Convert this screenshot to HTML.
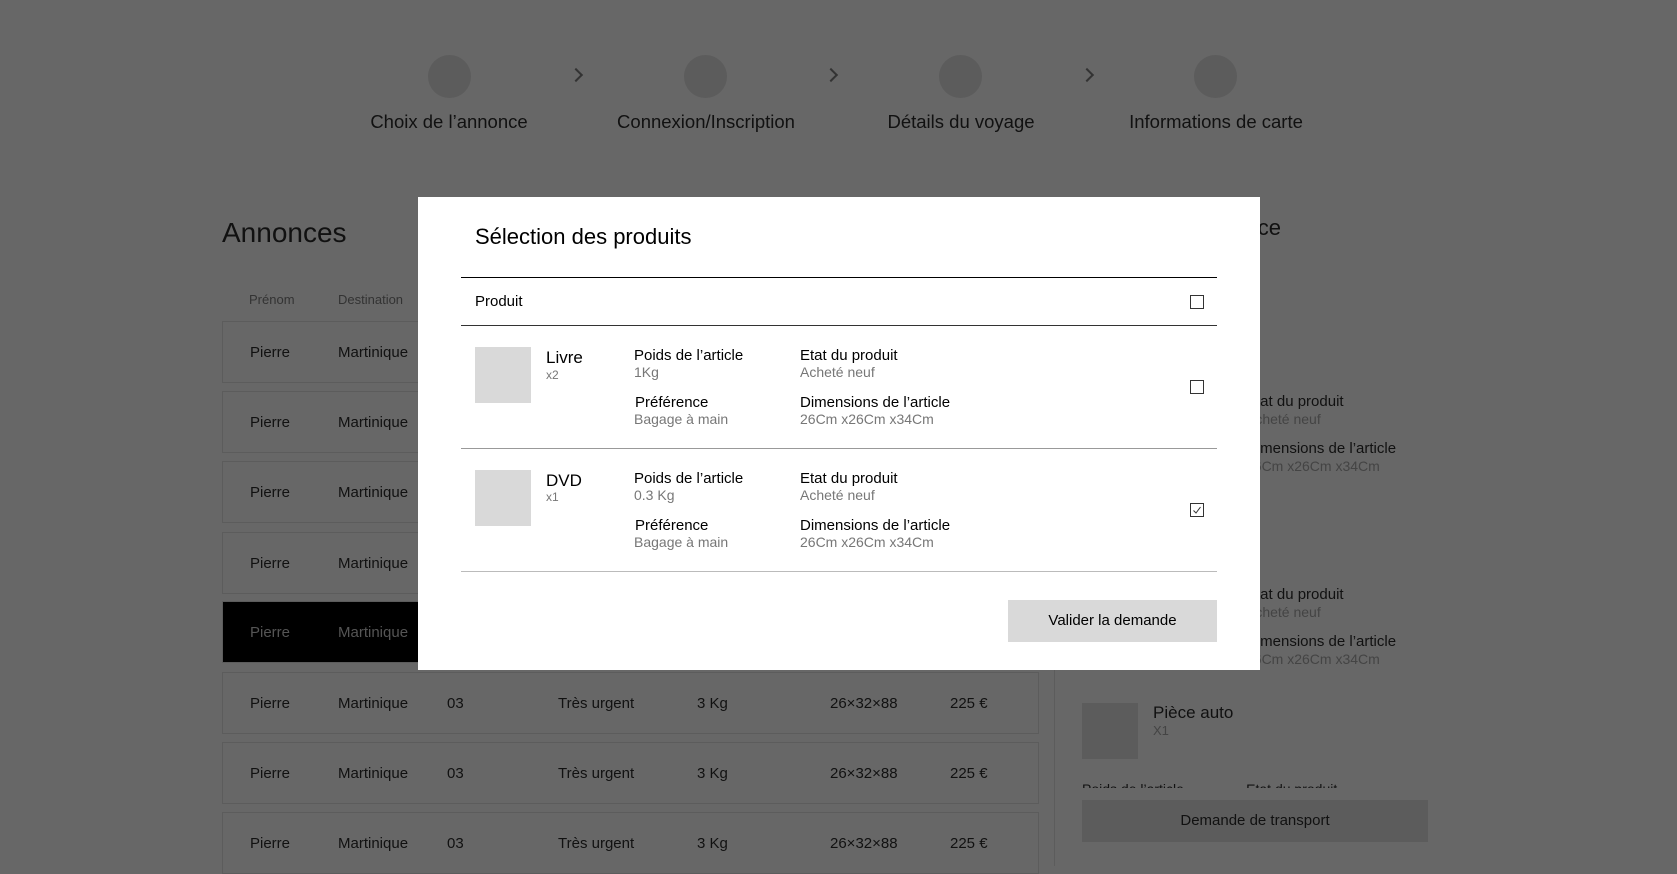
<!DOCTYPE html>
<html><head><meta charset="utf-8"><style>
*{margin:0;padding:0;box-sizing:border-box}
body{width:1677px;height:866px;background:#676767;font-family:"Liberation Sans",sans-serif;position:relative;overflow:hidden;color:#111}
.a{position:absolute;white-space:nowrap}
.c{position:absolute;width:43px;height:43px;border-radius:50%;background:#5c5c5c;top:55px}
.lbl{font-size:18.5px;top:111px;transform:translateX(-50%)}
.arr{position:absolute;top:70px;width:10px;height:10px;border-right:2px solid #333;border-top:2px solid #333;transform:rotate(45deg)}
.row{position:absolute;left:222px;width:817px;height:62px;border:1px solid #5c5c5c}
.row span{position:absolute;top:22px;font-size:15px;color:#111}
.blk{background:#000}.blk span{color:#555}
.m{position:absolute;left:418px;top:197px;width:842px;height:473px;background:#fff;color:#000}
.m .a{color:#000}
.h{font-size:15px}
.g{color:#777!important;font-size:14px}
.cb{position:absolute;width:14px;height:14px;border:1.3px solid #333}
.img{position:absolute;width:56px;height:56px;background:#d9d9d9}
</style></head><body>
<div class="c" style="left:428px"></div><div class="c" style="left:684px"></div><div class="c" style="left:939px"></div><div class="c" style="left:1194px"></div>
<div class="arr" style="left:571px"></div><div class="arr" style="left:826px"></div><div class="arr" style="left:1082px"></div>
<div class="a lbl" style="left:449px">Choix de l’annonce</div>
<div class="a lbl" style="left:706px">Connexion/Inscription</div>
<div class="a lbl" style="left:961px">Détails du voyage</div>
<div class="a lbl" style="left:1216px">Informations de carte</div>
<div class="a" style="left:222px;top:217px;font-size:28px">Annonces</div>
<div class="a" style="left:249px;top:292px;font-size:13px;color:#333">Prénom</div>
<div class="a" style="left:338px;top:292px;font-size:13px;color:#333">Destination</div>
<div class="row" style="top:321px"><span style="left:27px">Pierre</span><span style="left:115px">Martinique</span></div>
<div class="row" style="top:391px"><span style="left:27px">Pierre</span><span style="left:115px">Martinique</span></div>
<div class="row" style="top:461px"><span style="left:27px">Pierre</span><span style="left:115px">Martinique</span></div>
<div class="row" style="top:532px"><span style="left:27px">Pierre</span><span style="left:115px">Martinique</span></div>
<div class="row blk" style="top:601px"><span style="left:27px">Pierre</span><span style="left:115px">Martinique</span></div>
<div class="row" style="top:672px"><span style="left:27px">Pierre</span><span style="left:115px">Martinique</span><span style="left:224px">03</span><span style="left:335px">Très urgent</span><span style="left:474px">3 Kg</span><span style="left:607px">26×32×88</span><span style="left:727px">225 €</span></div>
<div class="row" style="top:742px"><span style="left:27px">Pierre</span><span style="left:115px">Martinique</span><span style="left:224px">03</span><span style="left:335px">Très urgent</span><span style="left:474px">3 Kg</span><span style="left:607px">26×32×88</span><span style="left:727px">225 €</span></div>
<div class="row" style="top:812px"><span style="left:27px">Pierre</span><span style="left:115px">Martinique</span><span style="left:224px">03</span><span style="left:335px">Très urgent</span><span style="left:474px">3 Kg</span><span style="left:607px">26×32×88</span><span style="left:727px">225 €</span></div>
<div class="a" style="left:1054px;top:215px;width:1px;height:651px;background:#5c5c5c"></div>
<div class="a" style="right:396px;top:215px;font-size:22px">Votre annonce</div>
<div class="a h" style="left:1246px;top:393px">Etat du produit</div><div class="a" style="left:1246px;top:411px;font-size:14px;color:#444">Acheté neuf</div>
<div class="a h" style="left:1246px;top:440px">Dimensions de l’article</div><div class="a" style="left:1246px;top:458px;font-size:14px;color:#444">26Cm x26Cm x34Cm</div>
<div class="a h" style="left:1246px;top:586px">Etat du produit</div><div class="a" style="left:1246px;top:604px;font-size:14px;color:#444">Acheté neuf</div>
<div class="a h" style="left:1246px;top:633px">Dimensions de l’article</div><div class="a" style="left:1246px;top:651px;font-size:14px;color:#444">26Cm x26Cm x34Cm</div>
<div class="a" style="left:1082px;top:703px;width:56px;height:56px;background:#5c5c5c"></div>
<div class="a" style="left:1153px;top:703px;font-size:17px">Pièce auto</div>
<div class="a" style="left:1153px;top:723px;font-size:13px;color:#444">X1</div>
<div class="a" style="left:1082px;top:782px;width:300px;height:6px;overflow:hidden;font-size:14px;line-height:14px">Poids de l’article &nbsp;&nbsp;&nbsp;&nbsp;&nbsp;&nbsp;&nbsp;&nbsp;&nbsp;&nbsp;&nbsp;&nbsp;&nbsp;&nbsp; Etat du produit</div>
<div class="a" style="left:1082px;top:800px;width:346px;height:42px;background:#5c5c5c;font-size:15px;text-align:center;line-height:42px">Demande de transport</div>

<div class="m">
<div class="a" style="left:57px;top:27px;font-size:22px">Sélection des produits</div>
<div class="a" style="left:43px;top:80px;width:756px;height:1px;background:#000"></div>
<div class="a" style="left:57px;top:96px;font-size:15px">Produit</div>
<div class="cb" style="left:772px;top:98px"></div>
<div class="a" style="left:43px;top:128px;width:756px;height:1px;background:#333"></div>

<div class="img" style="left:57px;top:150px"></div>
<div class="a" style="left:128px;top:151px;font-size:17px">Livre</div>
<div class="a g" style="left:128px;top:171px;font-size:12px!important">x2</div>
<div class="a h" style="left:216px;top:150px">Poids de l’article</div><div class="a g" style="left:216px;top:167px">1Kg</div>
<div class="a h" style="left:217px;top:197px">Préférence</div><div class="a g" style="left:216px;top:214px">Bagage à main</div>
<div class="a h" style="left:382px;top:150px">Etat du produit</div><div class="a g" style="left:382px;top:167px">Acheté neuf</div>
<div class="a h" style="left:382px;top:197px">Dimensions de l’article</div><div class="a g" style="left:382px;top:214px">26Cm x26Cm x34Cm</div>
<div class="cb" style="left:772px;top:183px"></div>
<div class="a" style="left:43px;top:251px;width:756px;height:1px;background:#999"></div>

<div class="img" style="left:57px;top:273px"></div>
<div class="a" style="left:128px;top:274px;font-size:17px">DVD</div>
<div class="a g" style="left:128px;top:293px;font-size:12px!important">x1</div>
<div class="a h" style="left:216px;top:273px">Poids de l’article</div><div class="a g" style="left:216px;top:290px">0.3 Kg</div>
<div class="a h" style="left:217px;top:320px">Préférence</div><div class="a g" style="left:216px;top:337px">Bagage à main</div>
<div class="a h" style="left:382px;top:273px">Etat du produit</div><div class="a g" style="left:382px;top:290px">Acheté neuf</div>
<div class="a h" style="left:382px;top:320px">Dimensions de l’article</div><div class="a g" style="left:382px;top:337px">26Cm x26Cm x34Cm</div>
<div class="cb" style="left:772px;top:306px"><svg width="12" height="12" style="position:absolute;left:0;top:0"><path d="M2.5 6.5 L5 9 L9.5 3" fill="none" stroke="#333" stroke-width="1"/></svg></div>
<div class="a" style="left:43px;top:374px;width:756px;height:1px;background:#bbb"></div>

<div class="a" style="left:590px;top:403px;width:209px;height:42px;background:#d9d9d9;font-size:15px;text-align:center;line-height:42px">Valider la demande</div>
</div>
</body></html>
